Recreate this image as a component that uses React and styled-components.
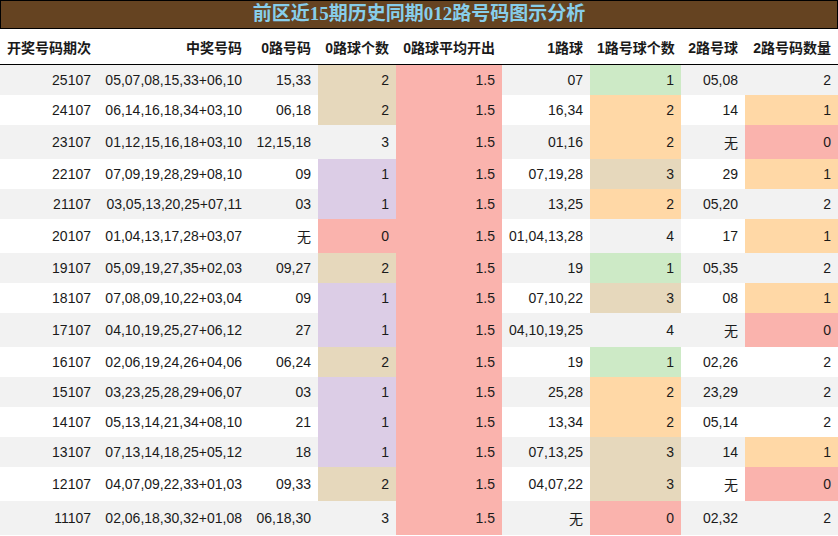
import React from 'react';
import styled, { createGlobalStyle } from 'styled-components';

const GlobalStyle = createGlobalStyle`
  html, body {
    margin: 0;
    padding: 0;
    background: #ffffff;
  }
  body {
    font-family: "Liberation Sans", "Noto Sans CJK SC", sans-serif;
    color: #1a1a1a;
  }
`;

const Page = styled.div`
  width: 838px;
  height: 536px;
  overflow: hidden;
`;

const TitleBar = styled.div`
  box-sizing: border-box;
  height: 29px;
  border: 1px solid #000;
  background: #654321;
  color: #87ceeb;
  font-family: "Liberation Serif", "Noto Sans CJK SC", serif;
  font-weight: bold;
  font-size: 19px;
  line-height: 26px;
  text-align: center;
`;

const Table = styled.table`
  width: 838px;
  table-layout: fixed;
  border-collapse: collapse;
  font-size: 14px;
`;

const HeadCell = styled.th`
  padding: 8px 7px 7px;
  font-weight: bold;
  text-align: ${(p) => (p.$left ? 'left' : 'right')};
  white-space: nowrap;
  border-bottom: 1px solid #000;
`;

const Row = styled.tr`
  background: ${(p) => (p.$striped ? '#f2f2f2' : '#ffffff')};
`;

const Cell = styled.td`
  padding: 7px 7px;
  text-align: right;
  white-space: nowrap;
  background: ${(p) => p.$bg || 'transparent'};
`;

const palette = {
  pink: '#fab3ad',
  lavender: '#dccde6',
  tan: '#e6d8bc',
  orange: '#ffd8a6',
  green: '#cdeac6',
  gray: '#f2f2f2',
};

const zeroCountColor = { 0: palette.pink, 1: palette.lavender, 2: palette.tan };
const oneCountColor = { 0: palette.pink, 1: palette.green, 2: palette.orange, 3: palette.tan, 4: palette.gray };
const twoCountColor = { 0: palette.pink, 1: palette.orange };

const widths = [98, 151, 69, 78, 106, 88, 91, 64, 93];

const headers = ['开奖号码期次', '中奖号码', '0路号码', '0路球个数', '0路球平均开出', '1路球', '1路号球个数', '2路号球', '2路号码数量'];

const rows = [
  ['25107', '05,07,08,15,33+06,10', '15,33', 2, '07', 1, '05,08', 2],
  ['24107', '06,14,16,18,34+03,10', '06,18', 2, '16,34', 2, '14', 1],
  ['23107', '01,12,15,16,18+03,10', '12,15,18', 3, '01,16', 2, '无', 0],
  ['22107', '07,09,19,28,29+08,10', '09', 1, '07,19,28', 3, '29', 1],
  ['21107', '03,05,13,20,25+07,11', '03', 1, '13,25', 2, '05,20', 2],
  ['20107', '01,04,13,17,28+03,07', '无', 0, '01,04,13,28', 4, '17', 1],
  ['19107', '05,09,19,27,35+02,03', '09,27', 2, '19', 1, '05,35', 2],
  ['18107', '07,08,09,10,22+03,04', '09', 1, '07,10,22', 3, '08', 1],
  ['17107', '04,10,19,25,27+06,12', '27', 1, '04,10,19,25', 4, '无', 0],
  ['16107', '02,06,19,24,26+04,06', '06,24', 2, '19', 1, '02,26', 2],
  ['15107', '03,23,25,28,29+06,07', '03', 1, '25,28', 2, '23,29', 2],
  ['14107', '05,13,14,21,34+08,10', '21', 1, '13,34', 2, '05,14', 2],
  ['13107', '07,13,14,18,25+05,12', '18', 1, '07,13,25', 3, '14', 1],
  ['12107', '04,07,09,22,33+01,03', '09,33', 2, '04,07,22', 3, '无', 0],
  ['11107', '02,06,18,30,32+01,08', '06,18,30', 3, '无', 0, '02,32', 2],
];

export default function App() {
  return (
    <Page>
      <GlobalStyle />
      <TitleBar>前区近15期历史同期012路号码图示分析</TitleBar>
      <Table>
        <colgroup>
          {widths.map((w, i) => (
            <col key={i} style={{ width: w }} />
          ))}
        </colgroup>
        <thead>
          <tr>
            {headers.map((h, i) => (
              <HeadCell key={h} $left={i === 0}>{h}</HeadCell>
            ))}
          </tr>
        </thead>
        <tbody>
          {rows.map(([issue, nums, zero, zeroN, one, oneN, two, twoN], i) => (
            <Row key={issue} $striped={i % 2 === 0}>
              <Cell>{issue}</Cell>
              <Cell>{nums}</Cell>
              <Cell>{zero}</Cell>
              <Cell $bg={zeroCountColor[zeroN]}>{zeroN}</Cell>
              <Cell $bg={palette.pink}>1.5</Cell>
              <Cell>{one}</Cell>
              <Cell $bg={oneCountColor[oneN]}>{oneN}</Cell>
              <Cell>{two}</Cell>
              <Cell $bg={twoCountColor[twoN]}>{twoN}</Cell>
            </Row>
          ))}
        </tbody>
      </Table>
    </Page>
  );
}
